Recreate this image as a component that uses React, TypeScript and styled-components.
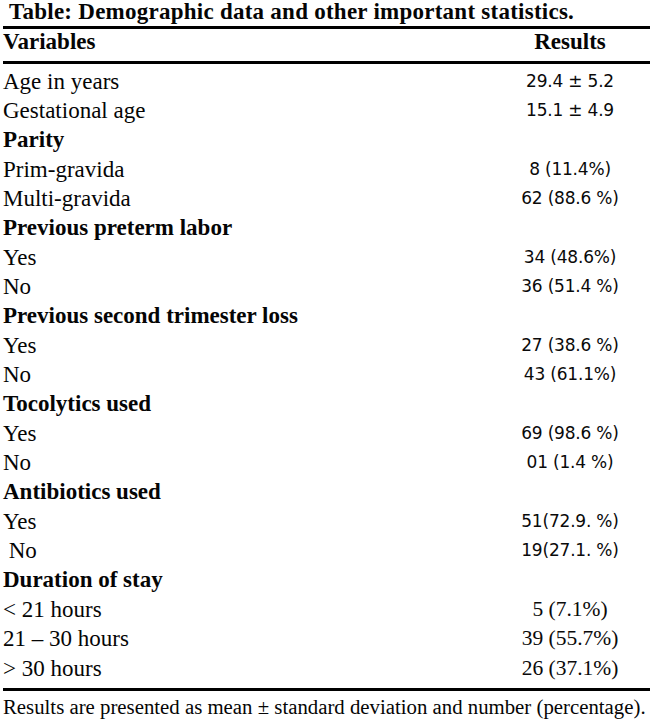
import React from "react";
import styled, { createGlobalStyle } from "styled-components";

const GlobalStyle = createGlobalStyle`
  html, body {
    margin: 0;
    padding: 0;
    background: #ffffff;
  }
`;

const Page = styled.div`
  width: 650px;
  box-sizing: border-box;
  padding-left: 3px;
  font-family: "Liberation Serif", "Times New Roman", serif;
  color: #050505;
`;

const Caption = styled.div`
  font-weight: bold;
  font-size: 23px;
  line-height: 24px;
  letter-spacing: 0.25px;
  padding: 0 0 2px 6px;
  white-space: nowrap;
`;

const Table = styled.div`
  border-top: 3px solid #000;
  border-bottom: 3px solid #000;
`;

const HeadRow = styled.div`
  display: grid;
  grid-template-columns: 1fr 160px;
  font-weight: bold;
  font-size: 23px;
  line-height: 26px;
  padding-bottom: 6px;
  border-bottom: 3px solid #000;
`;

const HeadCell = styled.div<{ $center?: boolean }>`
  text-align: ${(p) => (p.$center ? "center" : "left")};
`;

const Body = styled.div`
  padding: 2.65px 0 5px;
`;

const Row = styled.div`
  display: grid;
  grid-template-columns: 1fr 160px;
  height: 29.35px;
`;

const Label = styled.div<{ $heading?: boolean }>`
  font-size: 23px;
  line-height: 29.35px;
  font-weight: ${(p) => (p.$heading ? "bold" : "normal")};
  white-space: pre;
`;

const Value = styled.div<{ $serif?: boolean }>`
  text-align: center;
  line-height: 29.35px;
  white-space: pre;
  font-family: ${(p) =>
    p.$serif
      ? `"Liberation Serif", "Times New Roman", serif`
      : `"DejaVu Sans", Tahoma, sans-serif`};
  font-size: ${(p) => (p.$serif ? "21.5px" : "17px")};
  letter-spacing: ${(p) => (p.$serif ? "0" : "-0.2px")};
  color: #0a0a0a;
`;

const Footnote = styled.div`
  font-size: 20.8px;
  line-height: 24px;
  margin-top: 4px;
  white-space: nowrap;
`;

type Item = { label: string; value?: string; heading?: boolean; serif?: boolean };

const rows: Item[] = [
  { label: "Age in years", value: "29.4 ± 5.2" },
  { label: "Gestational age", value: "15.1 ± 4.9" },
  { label: "Parity", heading: true },
  { label: "Prim-gravida", value: "8 (11.4%)" },
  { label: "Multi-gravida", value: "62 (88.6 %)" },
  { label: "Previous preterm labor", heading: true },
  { label: "Yes", value: "34 (48.6%)" },
  { label: "No", value: "36 (51.4 %)" },
  { label: "Previous second trimester loss", heading: true },
  { label: "Yes", value: "27 (38.6 %)" },
  { label: "No", value: "43 (61.1%)" },
  { label: "Tocolytics used", heading: true },
  { label: "Yes", value: "69 (98.6 %)" },
  { label: "No", value: "01 (1.4 %)" },
  { label: "Antibiotics used", heading: true },
  { label: "Yes", value: "51(72.9. %)" },
  { label: " No", value: "19(27.1. %)" },
  { label: "Duration of stay", heading: true },
  { label: "< 21 hours", value: "5 (7.1%)", serif: true },
  { label: "21 – 30 hours", value: "39 (55.7%)", serif: true },
  { label: "> 30 hours", value: "26 (37.1%)", serif: true },
];

export default function App() {
  return (
    <>
      <GlobalStyle />
      <Page>
        <Caption>Table: Demographic data and other important statistics.</Caption>
        <Table>
          <HeadRow>
            <HeadCell>Variables</HeadCell>
            <HeadCell $center>Results</HeadCell>
          </HeadRow>
          <Body>
            {rows.map((r, i) => (
              <Row key={i}>
                <Label $heading={r.heading}>{r.label}</Label>
                <Value $serif={r.serif}>{r.value ?? ""}</Value>
              </Row>
            ))}
          </Body>
        </Table>
        <Footnote>
          Results are presented as mean ± standard deviation and number (percentage).
        </Footnote>
      </Page>
    </>
  );
}
